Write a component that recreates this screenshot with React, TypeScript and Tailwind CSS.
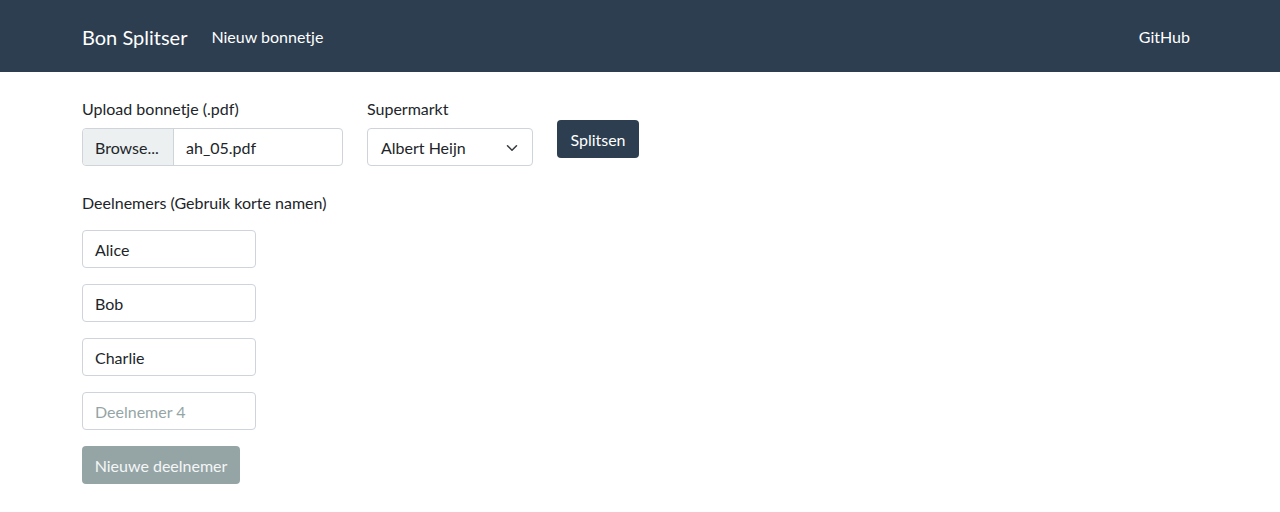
import React from "react";

const names = ["Alice", "Bob", "Charlie"];

export default function App() {
  return (
    <div className="min-h-[512px] bg-white text-[16px] leading-[24px] text-[#212529] font-['Lato',sans-serif]">
      <nav className="h-[72px] bg-[#2c3e50] text-white">
        <div className="mx-auto flex h-full w-[1140px] items-center px-3 pt-[2px]">
          <a href="#" className="mr-4 text-[20px] leading-[30px]">
            Bon Splitser
          </a>
          <a href="#" className="px-2">
            Nieuw bonnetje
          </a>
          <a href="#" className="ml-auto px-2">
            GitHub
          </a>
        </div>
      </nav>

      <main className="mx-auto w-[1140px] px-3 pt-[25px]">
        <div className="flex items-start gap-6">
          <div>
            <label className="mb-[7px] block">Upload bonnetje (.pdf)</label>
            <div className="flex h-[38px] w-[261px] rounded-[4px] border border-[#ced4da]">
              <span className="flex w-[91px] items-center rounded-l-[4px] border-r border-[#ced4da] bg-[#ecf0f1] px-3 pt-[1px]">
                Browse...
              </span>
              <span className="flex items-center px-3 pt-[1px]">ah_05.pdf</span>
            </div>
          </div>
          <div>
            <label className="mb-[7px] block">Supermarkt</label>
            <div className="flex h-[38px] w-[166px] items-center justify-between rounded-[4px] border border-[#ced4da] pl-[13px] pr-[14px] pt-[1px]">
              <span>Albert Heijn</span>
              <svg width="12" height="12" viewBox="0 0 16 16" fill="none">
                <path
                  d="M2 5l6 6 6-6"
                  stroke="#343a40"
                  strokeWidth="2"
                  strokeLinecap="round"
                  strokeLinejoin="round"
                />
              </svg>
            </div>
          </div>
          <button className="mt-[23px] h-[38px] w-[82px] rounded-[4px] bg-[#2c3e50] pt-[1px] text-white">
            Splitsen
          </button>
        </div>

        <label className="mt-[25px] block">Deelnemers (Gebruik korte namen)</label>
        <div className="mt-[15px] flex flex-col gap-4">
          {names.map((n) => (
            <div
              key={n}
              className="flex h-[38px] w-[174px] items-center rounded-[4px] border border-[#ced4da] px-3 pt-[1px]"
            >
              {n}
            </div>
          ))}
          <div className="flex h-[38px] w-[174px] items-center rounded-[4px] border border-[#ced4da] px-3 pt-[1px] text-[#95a5a6]">
            Deelnemer 4
          </div>
          <button className="h-[38px] w-[158px] rounded-[4px] bg-[#95a5a6] pt-[1px] text-[#f4f6f6]">
            Nieuwe deelnemer
          </button>
        </div>
      </main>
    </div>
  );
}
